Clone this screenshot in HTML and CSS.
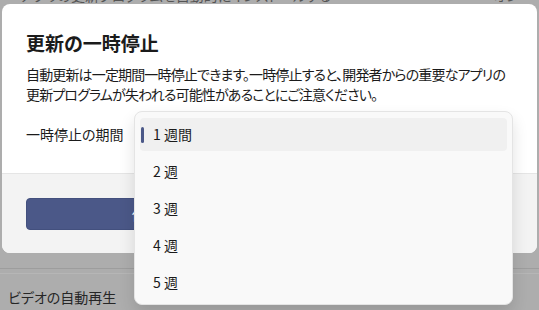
FILE: index.html
```html
<!DOCTYPE html>
<html lang="ja">
  <head>
    <meta charset="utf-8" />
    <title>更新の一時停止</title>
    <link rel="stylesheet" href="styles.css">
  </head>
  <body>
    <div class="page">
      <div class="page-top">
        <span>アプリの更新プログラムを自動的にインストールする</span>
        <span class="page-top-right">オン</span>
      </div>
      <div class="page-rule"></div>
      <div class="page-row">ビデオの自動再生</div>
    </div>

    <div class="dialog">
      <div class="dialog-body">
        <h1 class="dialog-title">更新の一時停止</h1>
        <p class="dialog-text">自動更新は一定期間一時停止できます。一時停止すると、開発者からの重要なアプリの<br>更新プログラムが失われる可能性があることにご注意ください。</p>
        <div class="field">
          <span class="field-label">一時停止の期間</span>
        </div>
      </div>
      <div class="dialog-footer">
        <button class="btn btn-primary">保存</button>
        <button class="btn">キャンセル</button>
      </div>

      <ul class="menu">
        <li class="menu-item selected">1 週間</li>
        <li class="menu-item">2 週</li>
        <li class="menu-item">3 週</li>
        <li class="menu-item">4 週</li>
        <li class="menu-item">5 週</li>
      </ul>
    </div>
  </body>
</html>
```

FILE: styles.css
```css
body {
  margin: 0;
  padding: 0;
  width: 539px;
  height: 310px;
  overflow: hidden;
  background-color: #adadad;
  font-family: "Noto Sans CJK JP", "Noto Sans", sans-serif;
  font-feature-settings: "palt";
  color: #1b1b1b;
  position: relative;
}

/* dimmed page behind the dialog */
.page {
  display: flex;
  flex-direction: column;
}

.page-top {
  height: 4px;
  overflow: hidden;
  display: flex;
  justify-content: space-between;
  padding: 0 20px;
  font-size: 14px;
  line-height: 14px;
  color: #555555;
}

.page-top span {
  margin-top: -12px;
}

.page-rule {
  margin-top: 264px;
  height: 1px;
  background-color: #9d9d9d;
  box-shadow: 0 5px 0 #b6b6b6;
}

.page-row {
  margin-top: 18px;
  padding-left: 8px;
  font-size: 14px;
  line-height: 20px;
  color: #262626;
}

/* dialog */
.dialog {
  position: absolute;
  left: 2px;
  top: 4px;
  width: 535px;
  height: 249px;
  background-color: #ffffff;
  border-radius: 8px;
  display: flex;
  flex-direction: column;
}

.dialog-body {
  padding: 26px 24px 23px;
  flex: 1;
}

.dialog-title {
  margin: 0;
  font-size: 19px;
  line-height: 26px;
  font-weight: 600;
}

.dialog-text {
  margin: 8px 0 0;
  font-size: 14px;
  line-height: 20px;
  letter-spacing: -0.85px;
  white-space: nowrap;
}

.field {
  margin-top: 14px;
  height: 32px;
  display: flex;
  align-items: center;
}

.field-label {
  font-size: 14px;
  line-height: 20px;
}

.dialog-footer {
  height: 80px;
  box-sizing: border-box;
  padding: 24px 24px;
  background-color: #f3f3f3;
  border-top: 1px solid #e5e5e5;
  border-radius: 0 0 8px 8px;
  display: grid;
  grid-template-columns: 1fr 1fr;
  gap: 8px;
}

.btn {
  height: 32px;
  border: 1px solid #d8d8d8;
  border-radius: 4px;
  background-color: #fbfbfb;
  font-family: inherit;
  font-size: 14px;
  color: #1b1b1b;
}

.btn-primary {
  background-color: #4b5888;
  border-color: #43507e;
  color: #ffffff;
}

/* open combobox list */
.menu {
  position: absolute;
  left: 132px;
  top: 107px;
  width: 379px;
  height: 194px;
  box-sizing: border-box;
  margin: 0;
  padding: 6px 5px;
  list-style: none;
  background-color: #f9f9f9;
  border: 1px solid #e4e4e4;
  border-radius: 8px;
  box-shadow: 0 8px 16px rgba(0, 0, 0, 0.12);
  display: flex;
  flex-direction: column;
  gap: 4px;
}

.menu-item {
  position: relative;
  height: 33px;
  flex-shrink: 0;
  padding-left: 13px;
  border-radius: 4px;
  font-size: 14px;
  line-height: 33px;
  color: #1b1b1b;
}

.menu-item.selected {
  background-color: #f0f0f0;
}

.menu-item.selected::before {
  content: "";
  position: absolute;
  left: 1px;
  top: 9px;
  width: 3px;
  height: 16px;
  border-radius: 2px;
  background-color: #4b5888;
}
```
